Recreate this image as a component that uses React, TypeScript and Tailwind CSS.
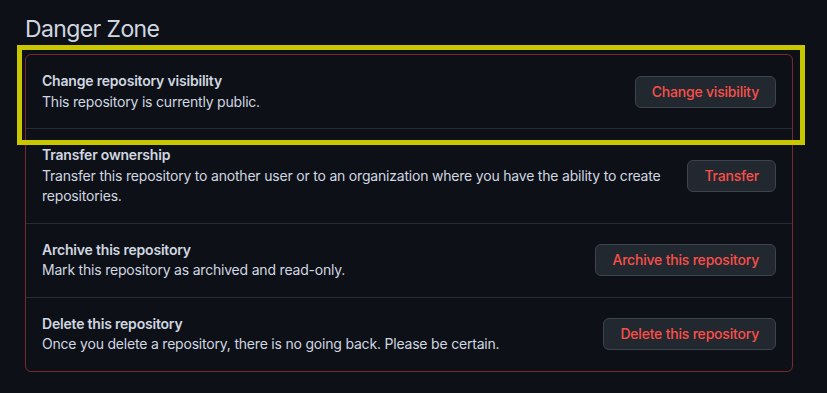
import React from "react";

const rows = [
  {
    title: "Change repository visibility",
    desc: "This repository is currently public.",
    btn: "Change visibility",
  },
  {
    title: "Transfer ownership",
    desc: "Transfer this repository to another user or to an organization where you have the ability to create repositories.",
    btn: "Transfer",
  },
  {
    title: "Archive this repository",
    desc: "Mark this repository as archived and read-only.",
    btn: "Archive this repository",
  },
  {
    title: "Delete this repository",
    desc: "Once you delete a repository, there is no going back. Please be certain.",
    btn: "Delete this repository",
  },
];

export default function App() {
  return (
    <div
      className="w-[827px] h-[393px] bg-[#0d1117] text-[#d1d7e0] overflow-hidden relative"
      style={{ fontFamily: "Inter, 'Noto Sans', 'Liberation Sans', sans-serif" }}
    >
      <div className="pl-[25px] pr-[34px] pt-[14px]">
        <h2 className="text-[23px] leading-[30px] font-normal tracking-[-0.6px] text-[#d1d7e0] mb-[10px]">
          Danger Zone
        </h2>
        <div className="border border-[#7a2a2c] rounded-[6px]">
          {rows.map((r, i) => (
            <div
              key={r.title}
              className={`flex items-center gap-4 p-4 ${i > 0 ? "border-t border-[#262c35]" : ""}`}
            >
              <div className="flex-1 min-w-0 text-[14px] leading-[20.5px] tracking-[-0.2px]">
                <div className="font-semibold text-[#d1d7e0]">{r.title}</div>
                <div className="text-[#d1d7e0]">{r.desc}</div>
              </div>
              <button className="shrink-0 h-[32px] px-4 rounded-[6px] bg-[#212830] border border-[#3d444d] text-[#fa4f48] text-[14px] font-medium leading-[20px] tracking-[-0.2px]">
                {r.btn}
              </button>
            </div>
          ))}
        </div>
      </div>
      <div className="absolute left-[17px] top-[45px] w-[788px] h-[100px] border-[5px] border-[#c9c800] pointer-events-none" />
    </div>
  );
}
